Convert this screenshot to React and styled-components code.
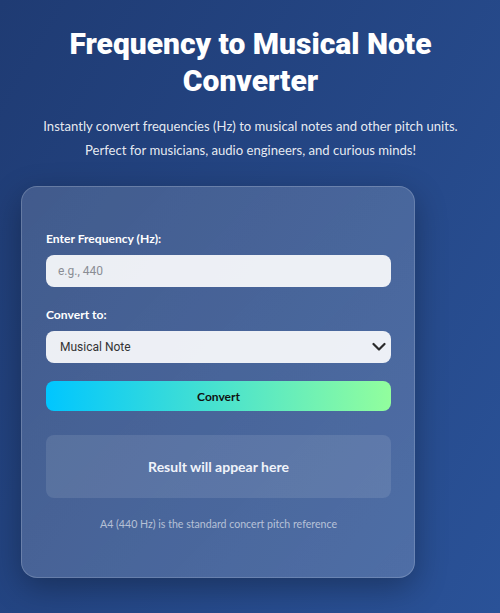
import React from "react";
import styled, { createGlobalStyle } from "styled-components";

const Global = createGlobalStyle`
  html, body { margin: 0; padding: 0; }
  body {
    min-height: 613px;
    background: linear-gradient(120deg, #1f3b73 0%, #2a5298 100%);
    font-family: Lato, "Open Sans", sans-serif;
    color: #fff;
  }
  * { box-sizing: border-box; }
`;

const Page = styled.div`
  min-height: 613px;
  padding: 25px 20px 36px 21px;
  display: flex;
  flex-direction: column;
`;

const Header = styled.header`
  text-align: center;
  display: flex;
  flex-direction: column;
  gap: 15px;
  margin-bottom: 24px;
`;

const Title = styled.h1`
  margin: 0;
  font-family: Roboto, "Liberation Sans", sans-serif;
  font-weight: 900;
  font-size: 30px;
  line-height: 37px;
  color: #fff;
`;

const Subtitle = styled.p`
  margin: 0;
  font-size: 13.1px;
  line-height: 24px;
  color: rgba(255, 255, 255, 0.9);
`;

const Card = styled.section`
  width: 394px;
  border: 1px solid rgba(255, 255, 255, 0.18);
  border-radius: 16px;
  background: linear-gradient(135deg, rgba(255,255,255,0.15), rgba(255,255,255,0.18));
  box-shadow: 0 10px 32px rgba(0, 0, 0, 0.3);
  padding: 43px 23px 45px 24px;
  display: flex;
  flex-direction: column;
`;

const Field = styled.div`
  display: flex;
  flex-direction: column;
  gap: 8px;
  margin-bottom: ${(p) => p.$mb || 0}px;
`;

const Label = styled.label`
  font-size: 12.1px;
  line-height: 17px;
  font-weight: 700;
  color: #fff;
`;

const Input = styled.input`
  height: 32px;
  border: none;
  border-radius: 8px;
  background: rgba(255, 255, 255, 0.9);
  padding: 0 12px;
  font-family: Roboto, sans-serif;
  font-size: 12px;
  color: #333;
  outline: none;
  &::placeholder { color: #8a8d94; }
`;

const SelectWrap = styled.div`
  position: relative;
  height: 32px;
`;

const Select = styled.select`
  width: 100%;
  height: 32px;
  border: none;
  border-radius: 8px;
  background: rgba(255, 255, 255, 0.9);
  padding: 0 14px;
  font-family: Roboto, sans-serif;
  font-size: 12px;
  color: #333;
  appearance: none;
  outline: none;
`;

const Chevron = styled.svg`
  position: absolute;
  right: 5px;
  top: 11px;
  pointer-events: none;
`;

const Button = styled.button`
  height: 30px;
  border: none;
  border-radius: 8px;
  background: linear-gradient(90deg, #00c6ff 0%, #92fe9d 100%);
  font-family: Lato, sans-serif;
  font-weight: 700;
  font-size: 12px;
  color: #111;
  margin-top: 18px;
  cursor: pointer;
`;

const Result = styled.div`
  margin-top: 24px;
  height: 63px;
  border-radius: 8px;
  background: rgba(255, 255, 255, 0.1);
  display: flex;
  align-items: center;
  justify-content: center;
  font-size: 14px;
  font-weight: 700;
  color: #f0f3fa;
`;

const Note = styled.p`
  margin: 19px 0 0;
  text-align: center;
  font-size: 10.6px;
  line-height: 15px;
  color: rgba(255, 255, 255, 0.6);
`;

export default function App() {
  return (
    <>
      <Global />
      <Page>
        <Header>
          <Title>Frequency to Musical Note Converter</Title>
          <Subtitle>
            Instantly convert frequencies (Hz) to musical notes and other pitch units.
            <br />
            Perfect for musicians, audio engineers, and curious minds!
          </Subtitle>
        </Header>
        <Card>
          <Field $mb={19}>
            <Label htmlFor="freq">Enter Frequency (Hz):</Label>
            <Input id="freq" placeholder="e.g., 440" />
          </Field>
          <Field>
            <Label htmlFor="unit">Convert to:</Label>
            <SelectWrap>
              <Select id="unit" defaultValue="note">
                <option value="note">Musical Note</option>
                <option value="cents">Cents</option>
                <option value="midi">MIDI Number</option>
              </Select>
              <Chevron width="14" height="10" viewBox="0 0 14 10">
                <path d="M1.5 2 L7 7.5 L12.5 2" fill="none" stroke="#2a2a2a" strokeWidth="2.2" strokeLinecap="round" strokeLinejoin="round" />
              </Chevron>
            </SelectWrap>
          </Field>
          <Button>Convert</Button>
          <Result>Result will appear here</Result>
          <Note>A4 (440 Hz) is the standard concert pitch reference</Note>
        </Card>
      </Page>
    </>
  );
}
